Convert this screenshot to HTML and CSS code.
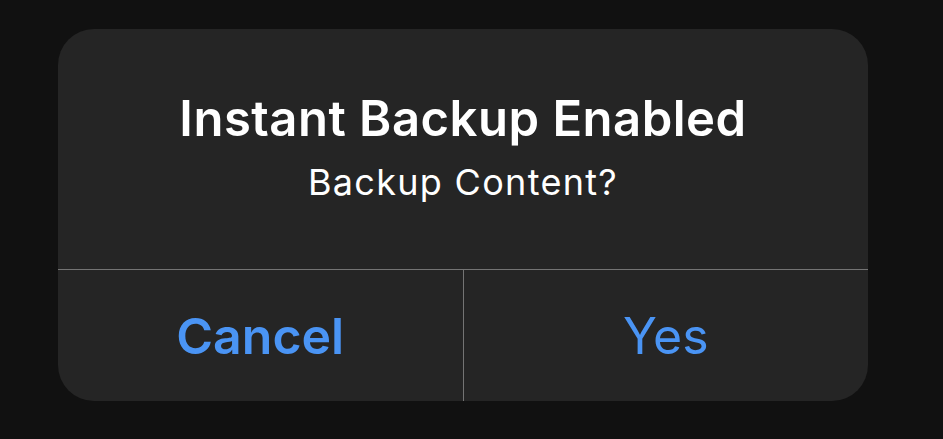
FILE: index.html
```html
<!DOCTYPE html>
<html lang="en">

<head>
    <meta charset="UTF-8">
    <meta name="viewport" content="width=device-width, initial-scale=1.0">
    <title>Instant Backup</title>
    <link rel="stylesheet" href="styles.css">
</head>

<body>

    <div class="alert">
        <div class="message">
            <h2>Instant Backup Enabled</h2>
            <p>Backup Content?</p>
        </div>

        <!-- buttons -->
        <div class="actions">
            <div class="btn cancel">Cancel</div>
            <div class="btn">Yes</div>
        </div>
    </div>

</body>

</html>
```

FILE: styles.css
```css
body {
    margin: 0;
    background-color: #111111;
    font-family: Inter, "Noto Sans", sans-serif;
}

.alert {
    width: 810px;
    height: 372px;
    margin: 29px 0 0 58px;
    background-color: #252525;
    border-radius: 36px;
    overflow: hidden;
}

.message {
    height: 241px;
    box-sizing: border-box;
    padding-bottom: 5px;
    border-bottom: 1px solid #747474;
    display: flex;
    flex-direction: column;
    align-items: center;
    justify-content: center;
    color: white;
}

.message h2 {
    margin: 0;
    font-size: 49px;
    font-weight: 600;
    letter-spacing: 0.5px;
}

.message p {
    margin: 12px 0 0;
    font-size: 36px;
    letter-spacing: 1.3px;
}

.actions {
    height: 131px;
    display: flex;
}

.actions>.btn {
    width: 50%;
    display: flex;
    justify-content: center;
    align-items: center;
    color: #4a94f4;
    font-size: 50px;
    cursor: pointer;
}

.actions>.btn+.btn {
    border-left: 1px solid #747474;
}

.btn.cancel {
    font-weight: 600;
}
```
